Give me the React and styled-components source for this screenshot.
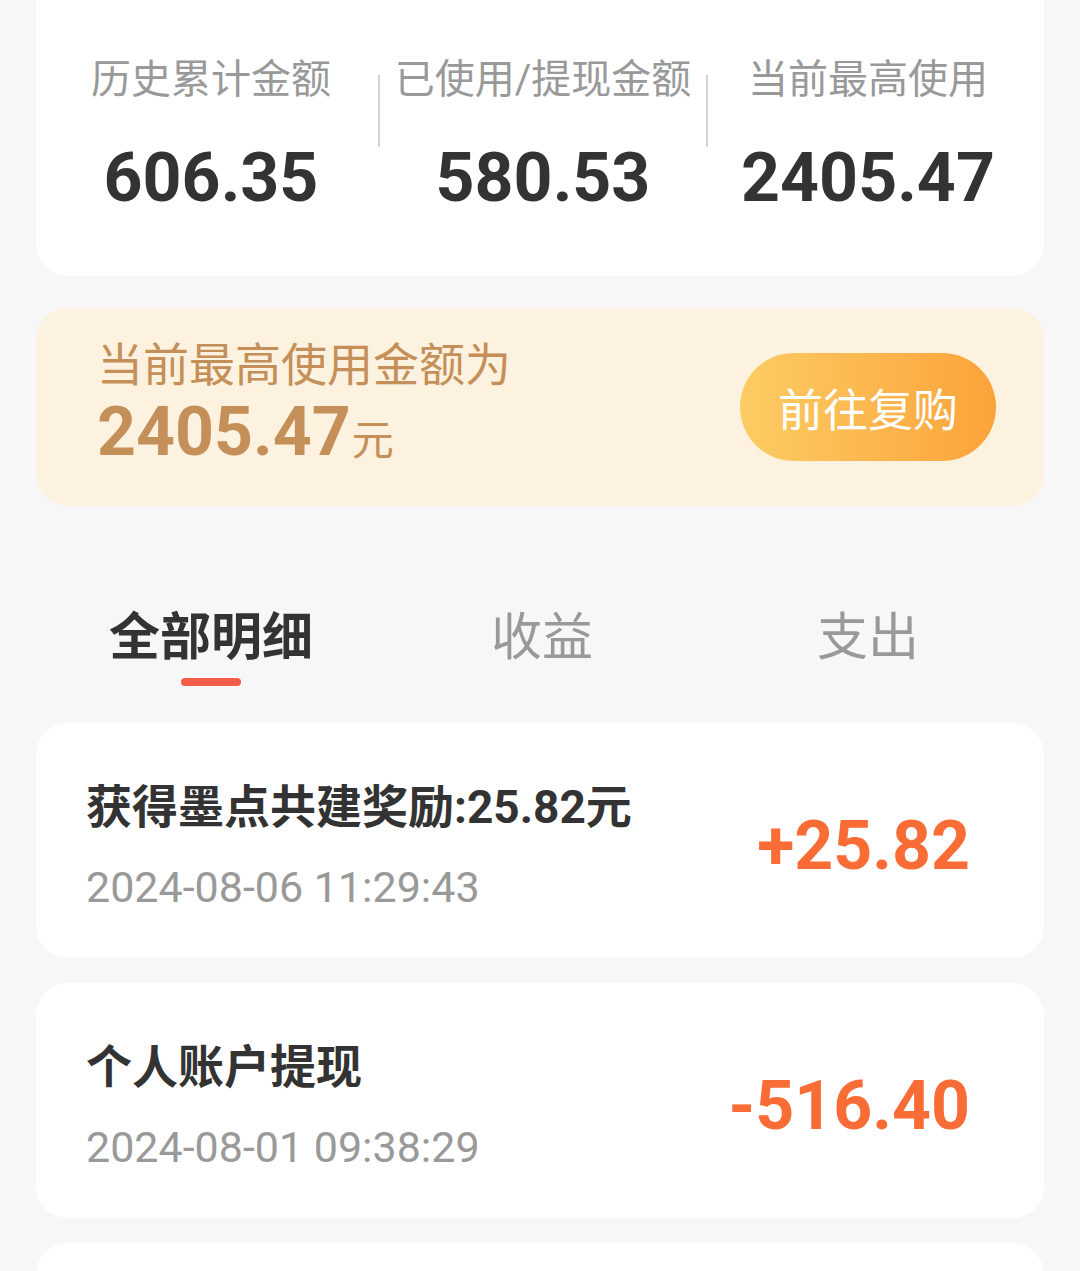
import styled, { createGlobalStyle } from 'styled-components';

const GlobalStyle = createGlobalStyle`
  body {
    margin: 0;
    background: #f7f7f7;
    font-family: Roboto, 'Noto Sans CJK SC', sans-serif;
  }
`;

const stats = [
  { label: '历史累计金额', value: '606.35' },
  { label: '已使用/提现金额', value: '580.53' },
  { label: '当前最高使用', value: '2405.47' },
];

const tabs = ['全部明细', '收益', '支出'];

const records = [
  { title: '获得墨点共建奖励:25.82元', time: '2024-08-06 11:29:43', amount: '+25.82' },
  { title: '个人账户提现', time: '2024-08-01 09:38:29', amount: '-516.40' },
  { title: '', time: '', amount: '' },
];

function App() {
  return (
    <Page>
      <GlobalStyle />
      <SummaryCard>
        {stats.map((s, i) => (
          <StatGroup key={s.label}>
            {i > 0 && <Divider />}
            <Stat>
              <StatLabel>{s.label}</StatLabel>
              <StatValue>{s.value}</StatValue>
            </Stat>
          </StatGroup>
        ))}
      </SummaryCard>

      <Banner>
        <BannerText>
          <BannerTitle>当前最高使用金额为</BannerTitle>
          <BannerAmount>
            2405.47<small>元</small>
          </BannerAmount>
        </BannerText>
        <RebuyButton>前往复购</RebuyButton>
      </Banner>

      <Tabs>
        {tabs.map((t, i) => (
          <Tab key={t} $active={i === 0}>
            <span>{t}</span>
            <Underline $active={i === 0} />
          </Tab>
        ))}
      </Tabs>

      <List>
        {records.map((r, i) => (
          <Record key={i}>
            <RecordInfo>
              <RecordTitle>{r.title}</RecordTitle>
              <RecordTime>{r.time}</RecordTime>
            </RecordInfo>
            <RecordAmount>{r.amount}</RecordAmount>
          </Record>
        ))}
      </List>
    </Page>
  );
}

const Page = styled.div`
  padding: 0 36px;
  height: 1271px;
  overflow: hidden;
  box-sizing: border-box;
`;

const SummaryCard = styled.div`
  display: grid;
  grid-template-columns: 334px 328px 322px;
  padding: 0 0 0 8px;
  height: 276px;
  box-sizing: border-box;
  background: #fff;
  border-radius: 0 0 32px 32px;
`;

const StatGroup = styled.div`
  display: flex;
`;

const Divider = styled.div`
  width: 2px;
  height: 72px;
  margin-top: 75px;
  background: #d4d4d4;
  flex-shrink: 0;
`;

const Stat = styled.div`
  flex: 1;
  display: flex;
  flex-direction: column;
  align-items: center;
  padding-top: 56px;
`;

const StatLabel = styled.div`
  font-size: 40px;
  line-height: 48px;
  color: #999;
  white-space: nowrap;
`;

const StatValue = styled.div`
  margin-top: 32px;
  font-size: 68px;
  line-height: 84px;
  font-weight: 700;
  color: #333;
`;

const Banner = styled.div`
  margin-top: 32px;
  height: 198px;
  box-sizing: border-box;
  padding: 0 48px 0 61px;
  display: flex;
  align-items: center;
  justify-content: space-between;
  background: #fdf2df;
  border-radius: 32px;
`;

const BannerText = styled.div`
  color: #c48f58;
  padding-top: 10px;
`;

const BannerTitle = styled.div`
  font-size: 46px;
  line-height: 48px;
`;

const BannerAmount = styled.div`
  font-size: 68px;
  line-height: 86px;
  font-weight: 700;

  small {
    font-size: 42px;
    font-weight: 400;
    margin-left: 1px;
  }
`;

const RebuyButton = styled.button`
  width: 256px;
  height: 108px;
  border: none;
  border-radius: 54px;
  background: linear-gradient(90deg, #fdcc64, #fba33a);
  color: #fff;
  font-family: 'Noto Sans CJK SC', sans-serif;
  font-size: 45px;
  padding: 0;
`;

const Tabs = styled.div`
  display: grid;
  grid-template-columns: 334px 328px 324px;
  padding-left: 8px;
  margin-top: 102px;
`;

const Tab = styled.div`
  display: flex;
  flex-direction: column;
  align-items: center;

  span {
    font-size: 51px;
    line-height: 60px;
    font-weight: ${(p) => (p.$active ? 700 : 400)};
    color: ${(p) => (p.$active ? '#333' : '#999')};
  }
`;

const Underline = styled.div`
  margin-top: 10px;
  width: 60px;
  height: 8px;
  border-radius: 4px;
  background: ${(p) => (p.$active ? '#f45d4a' : 'transparent')};
`;

const List = styled.div`
  margin-top: 37px;
  display: flex;
  flex-direction: column;
  gap: 25px;
`;

const Record = styled.div`
  height: 235px;
  flex-shrink: 0;
  box-sizing: border-box;
  padding: 0 74px 0 50px;
  display: flex;
  align-items: center;
  justify-content: space-between;
  background: #fff;
  border-radius: 32px;
`;

const RecordInfo = styled.div`
  display: flex;
  flex-direction: column;
  gap: 26px;
  margin-top: 10px;
`;

const RecordTitle = styled.div`
  font-size: 46px;
  line-height: 56px;
  font-weight: 700;
  color: #333;
`;

const RecordTime = styled.div`
  font-size: 43px;
  line-height: 52px;
  color: #999;
`;

const RecordAmount = styled.div`
  margin-top: 10px;
  font-size: 68px;
  font-weight: 700;
  color: #f96c35;
`;

export default App;
